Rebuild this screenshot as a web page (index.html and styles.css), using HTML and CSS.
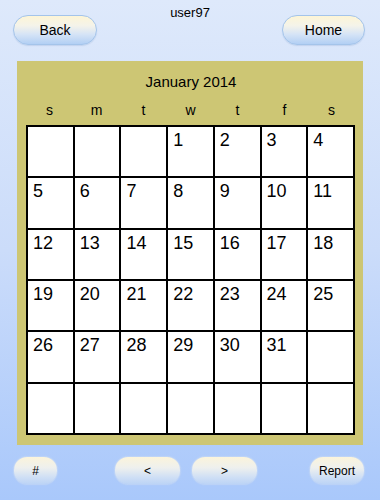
FILE: index.html
```html
<!DOCTYPE html>
<html>
<head>
<meta charset="utf-8">
<link rel="stylesheet" href="styles.css">
</head>
<body>
<div class="page">
  <div class="header">
    <button class="btn top-btn">Back</button>
    <div class="user">user97</div>
    <button class="btn top-btn home">Home</button>
  </div>
  <div class="panel">
    <div class="title">January 2014</div>
    <div class="weekdays">
      <span>s</span><span>m</span><span>t</span><span>w</span><span>t</span><span>f</span><span>s</span>
    </div>
    <div class="grid">
      <div class="cell"></div><div class="cell"></div><div class="cell"></div><div class="cell">1</div><div class="cell">2</div><div class="cell">3</div><div class="cell">4</div>
      <div class="cell">5</div><div class="cell">6</div><div class="cell">7</div><div class="cell">8</div><div class="cell">9</div><div class="cell">10</div><div class="cell">11</div>
      <div class="cell">12</div><div class="cell">13</div><div class="cell">14</div><div class="cell">15</div><div class="cell">16</div><div class="cell">17</div><div class="cell">18</div>
      <div class="cell">19</div><div class="cell">20</div><div class="cell">21</div><div class="cell">22</div><div class="cell">23</div><div class="cell">24</div><div class="cell">25</div>
      <div class="cell">26</div><div class="cell">27</div><div class="cell">28</div><div class="cell">29</div><div class="cell">30</div><div class="cell">31</div><div class="cell"></div>
      <div class="cell"></div><div class="cell"></div><div class="cell"></div><div class="cell"></div><div class="cell"></div><div class="cell"></div><div class="cell"></div>
    </div>
  </div>
  <div class="footer">
    <button class="btn bot-btn hash">#</button>
    <button class="btn bot-btn prev">&lt;</button>
    <button class="btn bot-btn next">&gt;</button>
    <button class="btn bot-btn report">Report</button>
  </div>
</div>
</body>
</html>
```
FILE: styles.css
```css
html, body {
  margin: 0;
  padding: 0;
}
body {
  width: 380px;
  height: 500px;
  overflow: hidden;
  font-family: "Liberation Sans", Arial, sans-serif;
  color: #000;
  background: linear-gradient(to bottom, #dee9fb 0%, #cbdcfa 50%, #a9c8fb 100%);
}
.page {
  width: 380px;
  height: 500px;
}
.btn {
  font-family: "Liberation Sans", Arial, sans-serif;
  color: #000;
  padding: 0;
  margin: 0;
  cursor: pointer;
}
.header {
  display: flex;
  align-items: flex-start;
  padding: 0 15px 0 13px;
  height: 45px;
}
.top-btn {
  width: 84px;
  height: 30px;
  margin-top: 15px;
  border: 1px solid #a4c4ea;
  border-radius: 15px;
  background: linear-gradient(to bottom, #fdf5d6 0%, #f4f3ea 35%, #d6e4f6 65%, #b2cff4 100%);
  font-size: 14px;
  box-shadow: 0 1px 1px rgba(120, 150, 200, 0.25);
}
.home {
  width: 83px;
}
.user {
  flex: 1;
  text-align: center;
  font-size: 13px;
  padding-top: 5px;
  padding-left: 1px;
}
.panel {
  margin: 16px 0 0 17px;
  width: 346px;
  height: 384px;
  box-sizing: border-box;
  background: #cdc674;
  padding: 7px 8px 0 9px;
}
.title {
  text-align: center;
  font-size: 15px;
  line-height: 28px;
  padding-left: 1px;
}
.weekdays {
  display: grid;
  grid-template-columns: repeat(7, 1fr);
  height: 29px;
  line-height: 28px;
  font-size: 14px;
  text-align: center;
}
.grid {
  display: grid;
  grid-template-columns: repeat(7, 1fr);
  grid-template-rows: repeat(6, 1fr);
  width: 329px;
  height: 310px;
  box-sizing: border-box;
  background: #fff;
  border-top: 2px solid #000;
  border-left: 2px solid #000;
}
.cell {
  border-right: 2px solid #000;
  border-bottom: 2px solid #000;
  font-size: 18px;
  line-height: 20px;
  padding: 3px 0 0 5px;
}
.footer {
  display: flex;
  align-items: flex-start;
  padding: 12px 0 0 14px;
}
.bot-btn {
  height: 27px;
  border: none;
  border-radius: 13px;
  background: linear-gradient(to bottom, #fbf4db 0%, #eef0ee 40%, #cfdff5 75%, #bcd4f6 100%);
  font-size: 12px;
  box-shadow: 0 0 2px rgba(240, 240, 235, 0.9);
}
.hash {
  width: 43px;
}
.prev {
  width: 65px;
  margin-left: 58px;
}
.next {
  width: 65px;
  margin-left: 12px;
}
.report {
  width: 54px;
  margin-left: 53px;
}
```
